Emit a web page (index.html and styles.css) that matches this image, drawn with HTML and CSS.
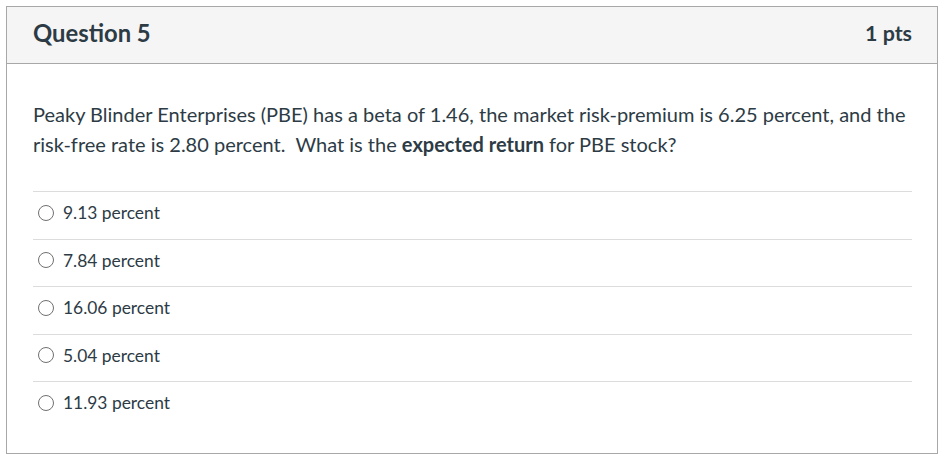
FILE: index.html
```html
<!DOCTYPE html>
<html>
<head>
<meta charset="utf-8">
<link rel="stylesheet" href="styles.css">
</head>
<body>
<div class="card">
  <div class="header">
    <span class="title">Question 5</span>
    <span class="pts">1 pts</span>
  </div>
  <div class="content">
    <p class="question">Peaky Blinder Enterprises (PBE) has a beta of 1.46, the market risk-premium is 6.25 percent, and the risk-free rate is 2.80 percent.&nbsp; What is the <strong>expected return</strong> for PBE stock?</p>
    <div class="answers">
      <label class="answer"><span class="radio"></span><span>9.13 percent</span></label>
      <label class="answer"><span class="radio"></span><span>7.84 percent</span></label>
      <label class="answer"><span class="radio"></span><span>16.06 percent</span></label>
      <label class="answer"><span class="radio"></span><span>5.04 percent</span></label>
      <label class="answer"><span class="radio"></span><span>11.93 percent</span></label>
    </div>
  </div>
</div>
</body>
</html>
```
FILE: styles.css
```css
* { box-sizing: border-box; }
html, body { margin: 0; background: #fff; }
body {
  padding: 6px;
  font-family: Lato, "Liberation Sans", sans-serif;
  color: #2d3b45;
}
.card {
  width: 932px;
  height: 448px;
  border: 1px solid #a8a8a8;
}
.header {
  height: 57px;
  background: #f5f5f5;
  border-bottom: 1px solid #a8a8a8;
  display: flex;
  align-items: center;
  justify-content: space-between;
  padding: 0 25px 4px 26px;
}
.title {
  font-size: 23.8px;
  font-weight: 700;
}
.pts {
  font-size: 21.4px;
  font-weight: 700;
}
.content {
  padding: 35px 20px 0 26px;
}
.question {
  margin: 0 0 32px;
  font-size: 20px;
  line-height: 30px;
}
.question strong { font-weight: 700; }
.answers {
  display: flex;
  flex-direction: column;
  margin-right: 5px;
}
.answer {
  display: flex;
  align-items: center;
  height: 47.5px;
  border-top: 1px solid #dcdcdc;
  font-size: 17.4px;
  padding: 0 0 5px 5px;
  gap: 9px;
}
.radio {
  width: 16px;
  height: 16px;
  border: 1px solid #707070;
  border-radius: 50%;
  flex: none;
  background: #fff;
}
```
